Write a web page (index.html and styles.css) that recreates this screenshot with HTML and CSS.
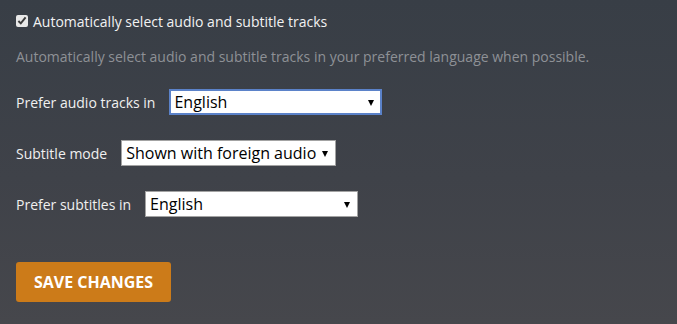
FILE: index.html
```html
<!DOCTYPE html>
<html>
<head>
<meta charset="utf-8">
<link rel="stylesheet" href="styles.css">
</head>
<body>
<div class="page">
  <label class="check-row">
    <input type="checkbox" class="check" checked>
    <span class="check-label">Automatically select audio and subtitle tracks</span>
  </label>
  <p class="help">Automatically select audio and subtitle tracks in your preferred language when possible.</p>

  <div class="field field-first">
    <span class="field-label">Prefer audio tracks in</span>
    <span class="select-wrap select-focus select-wide">
      <select class="select"><option>English</option></select>
    </span>
  </div>

  <div class="field">
    <span class="field-label">Subtitle mode</span>
    <span class="select-wrap">
      <select class="select"><option>Shown with foreign audio</option></select>
    </span>
  </div>

  <div class="field">
    <span class="field-label">Prefer subtitles in</span>
    <span class="select-wrap select-wide">
      <select class="select"><option>English</option></select>
    </span>
  </div>

  <button class="save">SAVE CHANGES</button>
</div>
</body>
</html>
```

FILE: styles.css
```css
html, body {
  margin: 0;
  height: 100%;
}
body {
  background: linear-gradient(180deg, #383e46 0%, #3f4249 55%, #46474c 100%);
  font-family: "Open Sans", "Noto Sans", sans-serif;
  color: #eeeeee;
  overflow: hidden;
}
.page {
  padding: 11px 16px 0 16px;
}
.check-row {
  display: flex;
  align-items: center;
  gap: 5px;
  height: 20px;
  font-size: 14px;
  color: #f2f2f2;
}
.check {
  margin: 0;
  width: 12px;
  height: 12px;
  accent-color: #e8e8e8;
}
.help {
  margin: 16px 0 0 0;
  font-size: 14px;
  line-height: 20px;
  color: #8e9196;
}
.field {
  display: flex;
  align-items: center;
  gap: 14px;
  margin-top: 25px;
  height: 26px;
}
.field-first {
  margin-top: 22px;
}
.field-label {
  font-size: 14px;
  color: #f0f0f0;
}
.select-wrap {
  position: relative;
  display: inline-block;
}
.select-wrap::after {
  content: "";
  position: absolute;
  right: 8px;
  top: 11px;
  border-left: 3.5px solid transparent;
  border-right: 3.5px solid transparent;
  border-top: 6px solid #000;
  pointer-events: none;
}
.select {
  appearance: none;
  -webkit-appearance: none;
  box-sizing: border-box;
  height: 26px;
  margin: 0;
  padding: 0 18px 0 4px;
  border: 1px solid #a3a3a3;
  border-radius: 0;
  background: #ffffff;
  color: #000;
  font-family: "Open Sans", "Noto Sans", sans-serif;
  font-size: 16px;
}
.select-wide .select {
  width: 213px;
}
.select-focus .select {
  border: 2px solid #5b82c9;
  padding-left: 3px;
}
.save {
  margin-top: 45px;
  height: 40px;
  width: 155px;
  padding: 0;
  border: none;
  border-radius: 3px;
  background: #cc7b19;
  color: #ffffff;
  font-family: "Open Sans", "Noto Sans", sans-serif;
  font-weight: 700;
  font-size: 16px;
}
```
